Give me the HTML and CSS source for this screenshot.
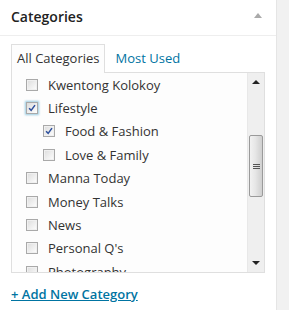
FILE: index.html
```html
<!DOCTYPE html>
<html>
<head>
<meta charset="utf-8">
<link rel="stylesheet" href="styles.css">
</head>
<body>
<div class="page">
  <div class="postbox">
    <div class="hndle">
      <h3 class="title">Categories</h3>
      <span class="toggle"></span>
    </div>
    <div class="inside">
      <ul class="tabs">
        <li class="tab active">All Categories</li>
        <li class="tab">Most Used</li>
      </ul>
      <div class="panel">
        <div class="list-wrap">
          <ul class="cats">
            <li class="row"><span class="cb"></span>Kwentong Kolokoy</li>
            <li class="row"><span class="cb checked focus"><svg viewBox="0 0 12 12" class="tick"><path d="M2.5 6.2 L5 8.8 L9.6 2.6" /></svg></span>Lifestyle</li>
            <li class="row child"><span class="cb checked"><svg viewBox="0 0 12 12" class="tick"><path d="M2.5 6.2 L5 8.8 L9.6 2.6" /></svg></span>Food &amp; Fashion</li>
            <li class="row child"><span class="cb"></span>Love &amp; Family</li>
            <li class="row"><span class="cb"></span>Manna Today</li>
            <li class="row"><span class="cb"></span>Money Talks</li>
            <li class="row"><span class="cb"></span>News</li>
            <li class="row"><span class="cb"></span>Personal Q's</li>
            <li class="row"><span class="cb"></span>Photography</li>
          </ul>
        </div>
        <div class="scrollbar">
          <span class="arrow up"></span>
          <div class="track">
            <div class="thumb"><span class="grip"></span></div>
          </div>
          <span class="arrow down"></span>
        </div>
      </div>
      <a class="add" href="#">+ Add New Category</a>
    </div>
  </div>
  <div class="side"></div>
</div>
</body>
</html>
```
FILE: styles.css
```css
* { box-sizing: border-box; }
html, body { margin: 0; padding: 0; }
body {
  background: #f1f1f1;
  font-family: "Open Sans", "Liberation Sans", sans-serif;
  color: #444;
  width: 289px;
  height: 310px;
  overflow: hidden;
}
.page { display: flex; height: 310px; }
.postbox {
  width: 277px;
  background: #fff;
  border-right: 1px solid #e5e5e5;
  height: 310px;
}
.side { flex: 1; background: #f1f1f1; }
.hndle {
  height: 36px;
  border-bottom: 1px solid #eee;
  display: flex;
  align-items: center;
  justify-content: space-between;
  padding: 0 14px 0 11px;
}
.title {
  margin: 0;
  font-size: 14px;
  font-weight: 600;
  color: #222;
  line-height: 1;
  margin-top: -2px;
}
.toggle {
  width: 0; height: 0;
  border-left: 4px solid transparent;
  border-right: 4px solid transparent;
  border-bottom: 5px solid #aaa;
  margin-top: -4px;
}
.inside { padding: 8px 12px 0 11px; }
.tabs {
  list-style: none;
  margin: 0;
  padding: 0;
  display: flex;
  height: 28px;
}
.tab {
  font-size: 13px;
  line-height: 18px;
  padding: 5px 5px 5px 6px;
  color: #0074a2;
}
.tab.active {
  color: #333;
  background: #fdfdfd;
  border: 1px solid #dfdfdf;
  border-bottom: none;
  height: 29px;
  position: relative;
  z-index: 1;
  padding-top: 4px;
  padding-left: 5px;
  padding-right: 5px;
}
.tab + .tab { padding-left: 10px; }
.panel {
  width: 254px;
  height: 201px;
  border: 1px solid #dfdfdf;
  background: #fdfdfd;
  display: flex;
}
.list-wrap { flex: 1; overflow: hidden; }
.cats { list-style: none; margin: 0; padding: 0; }
.row {
  height: 23.4px;
  display: flex;
  align-items: center;
  font-size: 13px;
  color: #333;
  padding-left: 14px;
  white-space: nowrap;
}
.row.child { padding-left: 31px; }
.cb {
  width: 12px;
  height: 12px;
  border: 1px solid #a9a9a9;
  background: linear-gradient(135deg, #dcdcdc 0%, #f4f4f4 70%, #fff 100%);
  box-shadow: inset 0 0 0 1px #f0f0f0;
  margin-right: 10px;
  flex: none;
  position: relative;
  display: flex;
}
.cb.focus { box-shadow: 0 0 2px 1px rgba(30,140,190,0.45); }
.tick { width: 10px; height: 10px; margin: 0; }
.tick path { fill: none; stroke: #2d4f9c; stroke-width: 1.8; }
.scrollbar {
  width: 17px;
  background: #efefef;
  border-left: 1px solid #e8e8e8;
  display: flex;
  flex-direction: column;
  align-items: center;
}
.arrow {
  width: 0; height: 0;
  border-left: 4px solid transparent;
  border-right: 4px solid transparent;
  flex: none;
}
.arrow.up { border-bottom: 4px solid #222; margin: 7px 0 5px; }
.arrow.down { border-top: 4px solid #222; margin: 5px 0 7px; }
.track { flex: 1; width: 100%; position: relative; padding-top: 46px; display: flex; justify-content: center; }
.thumb {
  width: 14px;
  height: 62px;
  border: 1px solid #9a9a9a;
  border-radius: 2px;
  background: linear-gradient(90deg, #f2f2f2 0%, #e6e6e6 45%, #cfcfcf 100%);
  display: flex;
  align-items: center;
  justify-content: center;
}
.grip {
  width: 7px;
  height: 5px;
  border-top: 1px solid #555;
  border-bottom: 1px solid #555;
  position: relative;
}
.grip::after {
  content: "";
  position: absolute;
  left: 0; right: 0; top: 1px;
  border-top: 1px solid #555;
}
.add {
  display: inline-block;
  margin-top: 12px;
  font-size: 13px;
  font-weight: 600;
  color: #0074a2;
  text-decoration: underline;
}
```
